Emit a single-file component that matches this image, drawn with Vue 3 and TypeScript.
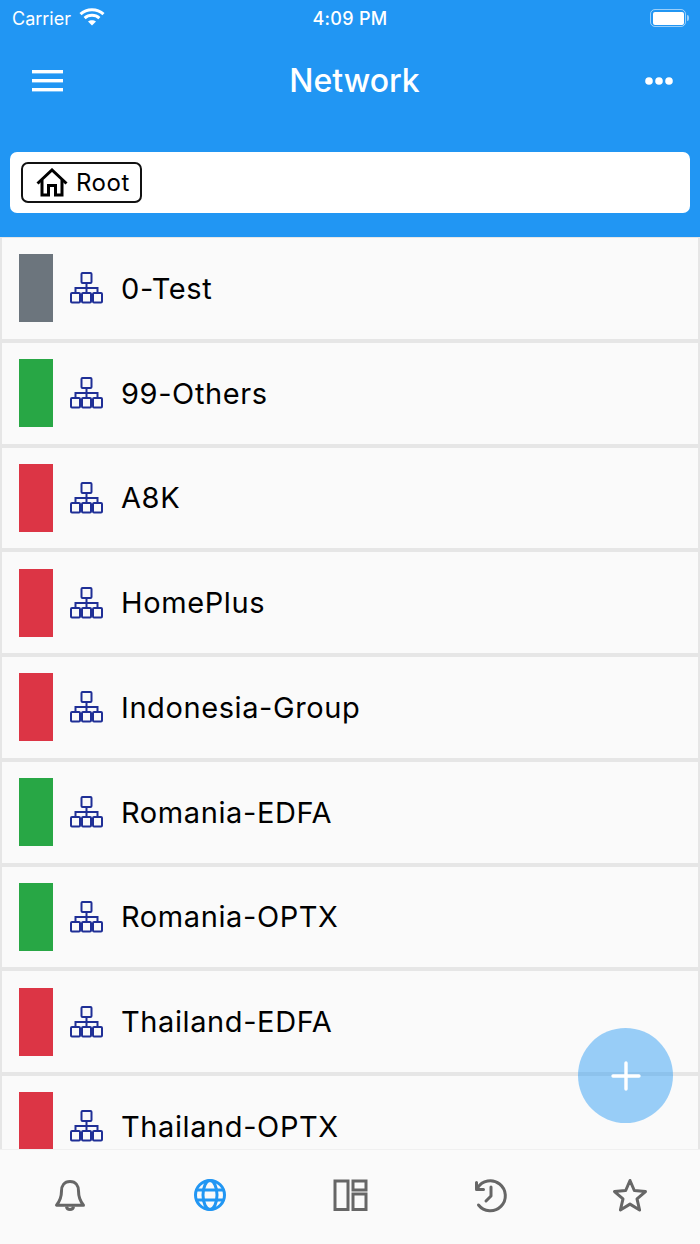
<script setup lang="ts">
interface Item { name: string; color: string }
const items: Item[] = [
  { name: '0-Test', color: '#6c757d' },
  { name: '99-Others', color: '#28a745' },
  { name: 'A8K', color: '#dc3545' },
  { name: 'HomePlus', color: '#dc3545' },
  { name: 'Indonesia-Group', color: '#dc3545' },
  { name: 'Romania-EDFA', color: '#28a745' },
  { name: 'Romania-OPTX', color: '#28a745' },
  { name: 'Thailand-EDFA', color: '#dc3545' },
  { name: 'Thailand-OPTX', color: '#dc3545' },
]
</script>

<template>
  <div class="screen">
    <header class="top">
      <div class="status">
        <div class="status-left">
          <span>Carrier</span>
          <svg class="wifi" width="26" height="19" viewBox="0 0 26 19" fill="none" stroke="#fff" stroke-width="3">
            <path d="M1.5 7.2C7.8 1.2 18.2 1.2 24.5 7.2" />
            <path d="M5.6 11.2C9.8 7.4 16.2 7.4 20.4 11.2" />
            <path d="M13 18.6L9 14.6C11.2 12.8 14.8 12.8 17 14.6Z" fill="#fff" stroke="none" />
          </svg>
        </div>
        <span class="clock">4:09 PM</span>
        <div class="battery">
          <div class="battery-body"><div class="battery-fill"></div></div>
          <div class="battery-cap"></div>
        </div>
      </div>
      <div class="nav">
        <svg width="32" height="22" viewBox="0 0 32 22" fill="#fff">
          <rect y="0" width="31" height="3.4" />
          <rect y="9" width="31" height="3.4" />
          <rect y="18" width="31" height="3.4" />
        </svg>
        <h1 class="title">Network</h1>
        <svg width="28" height="8" viewBox="0 0 28 8" fill="#fff">
          <circle cx="4" cy="4" r="3.8" />
          <circle cx="14" cy="4" r="3.8" />
          <circle cx="24" cy="4" r="3.8" />
        </svg>
      </div>
      <div class="crumbs">
        <div class="chip">
          <svg width="32" height="29" viewBox="0 0 32 29" fill="none" stroke="#000" stroke-width="3">
            <path d="M1.5 15.5L16 2L30.5 15.5" stroke-linejoin="miter" />
            <path d="M6 12V27H12.5V17.5H19.5V27H26V12" />
          </svg>
          <span>Root</span>
        </div>
      </div>
    </header>

    <main class="list">
      <div v-for="item in items" :key="item.name" class="row">
        <div class="bar" :style="{ background: item.color }"></div>
        <svg class="tree" width="33" height="32" viewBox="0 0 33 32" fill="none" stroke="#1f2f96" stroke-width="2">
          <rect x="11.5" y="1" width="10" height="10" rx="1" />
          <path d="M16.5 11V21M5.5 21V16H27.5V21" />
          <rect x="1" y="21" width="9" height="9.5" rx="1" />
          <rect x="12" y="21" width="9" height="9.5" rx="1" />
          <rect x="23" y="21" width="9" height="9.5" rx="1" />
        </svg>
        <span class="name">{{ item.name }}</span>
      </div>
    </main>

    <button class="fab" aria-label="Add">
      <svg width="30" height="30" viewBox="0 0 30 30" stroke="#fff" stroke-width="3.4" stroke-linecap="round">
        <path d="M15 2V28M2 15H28" />
      </svg>
    </button>

    <nav class="tabs">
      <svg class="tab" width="36" height="36" viewBox="0 0 36 36" fill="none" stroke="#666" stroke-width="3" stroke-linejoin="round">
        <path d="M18 4.5C12 4.5 9.5 9 9.5 14C9.5 20.5 8 24 4.5 28.2H31.5C28 24 26.5 20.5 26.5 14C26.5 9 24 4.5 18 4.5Z" />
        <path d="M14.5 29.5C15 33.5 21 33.5 21.5 29.5" />
      </svg>
      <svg class="tab" width="36" height="36" viewBox="0 0 36 36" fill="none" stroke="#2196f3" stroke-width="3">
        <circle cx="18" cy="18" r="14.5" />
        <ellipse cx="18" cy="18" rx="7" ry="14.5" />
        <path d="M4 13H32M4 23H32" />
      </svg>
      <svg class="tab" width="36" height="36" viewBox="0 0 36 36" fill="none" stroke="#666" stroke-width="3">
        <rect x="3" y="4" width="13" height="28.5" />
        <rect x="21" y="4" width="13" height="9" />
        <rect x="21" y="17" width="13" height="15.5" />
      </svg>
      <svg class="tab" width="36" height="36" viewBox="0 0 36 36" fill="none" stroke="#666" stroke-width="3" stroke-linecap="round" stroke-linejoin="round">
        <path d="M5.5 11A15 15 0 1 1 6.500 28" />
        <path d="M4.500 5.500V12.500H11.500" />
        <path d="M19 10V19L14 24" />
      </svg>
      <svg class="tab" width="36" height="36" viewBox="0 0 36 36" fill="none" stroke="#666" stroke-width="3" stroke-linejoin="round">
        <path d="M18 3.500L22.300 13.500L33.500 14.600L25 21.900L27.600 33L18 27.100L8.400 33L11 21.900L2.500 14.600L13.700 13.500Z" />
      </svg>
    </nav>
  </div>
</template>

<style>
html, body { margin: 0; padding: 0; }
</style>

<style scoped>
.screen {
  position: relative;
  width: 700px;
  height: 1244px;
  overflow: hidden;
  display: flex;
  flex-direction: column;
  background: #fafafa;
  font-family: Inter, "Noto Sans", sans-serif;
}
.top {
  flex: none;
  height: 237px;
  box-sizing: border-box;
  background: #2196f3;
  color: #fff;
  padding: 0 10px;
  display: flex;
  flex-direction: column;
}
.status {
  height: 36px;
  display: flex;
  align-items: center;
  justify-content: space-between;
  position: relative;
  padding: 0 1px 0 2px;
  font-size: 18px;
}
.status-left { display: flex; align-items: center; gap: 8px; }
.wifi { margin-top: -4px; }
.clock {
  position: absolute;
  left: 0;
  right: 0;
  text-align: center;
  font-weight: 500;
  letter-spacing: 0.3px;
}
.battery { display: flex; align-items: center; gap: 1px; }
.battery-body {
  width: 36px;
  height: 18px;
  box-sizing: border-box;
  border: 1.5px solid rgba(255, 255, 255, 0.55);
  border-radius: 5px;
  padding: 1.5px;
}
.battery-fill { width: 100%; height: 100%; background: #fff; border-radius: 2px; }
.battery-cap { width: 2px; height: 6px; background: rgba(255, 255, 255, 0.55); border-radius: 0 2px 2px 0; }
.nav {
  height: 90px;
  display: flex;
  align-items: center;
  justify-content: space-between;
  padding: 0 17px 0 22px;
}
.title {
  margin: 0;
  font-size: 32px;
  font-weight: 500;
  line-height: 40px;
}
.crumbs {
  margin-top: 26px;
  height: 61px;
  box-sizing: border-box;
  background: #fff;
  border-radius: 7px;
  padding: 10px 11px;
  display: flex;
  align-items: flex-start;
}
.chip {
  width: 121px;
  height: 41px;
  box-sizing: border-box;
  border: 2px solid #111;
  border-radius: 7px;
  color: #000;
  display: flex;
  align-items: center;
  padding-left: 13px;
  gap: 8px;
  font-size: 24px;
  letter-spacing: 0.5px;
}
.list { flex: 1; min-height: 0; overflow: hidden; }
.row {
  height: 104.75px;
  box-sizing: border-box;
  background: #fafafa;
  border: solid #e6e6e6;
  border-width: 1px 2px 3px;
  padding-left: 17px;
  display: flex;
  align-items: center;
}
.bar { width: 34px; height: 68px; }
.tree { margin-left: 17px; }
.name {
  margin-left: 18px;
  font-size: 29px;
  color: #000;
  letter-spacing: 0.6px;
}
.fab {
  position: absolute;
  left: 578px;
  top: 1028px;
  width: 95px;
  height: 95px;
  padding: 0;
  border: none;
  border-radius: 50%;
  background: rgba(33, 150, 243, 0.45);
  display: flex;
  align-items: center;
  justify-content: center;
}
.tabs {
  flex: none;
  height: 95px;
  background: #fafafa;
  border-top: 1px solid #f0f0f0;
  box-sizing: border-box;
  display: grid;
  grid-template-columns: repeat(5, 1fr);
  align-items: start;
  padding-top: 27px;
}
.tab { justify-self: center; }
</style>
